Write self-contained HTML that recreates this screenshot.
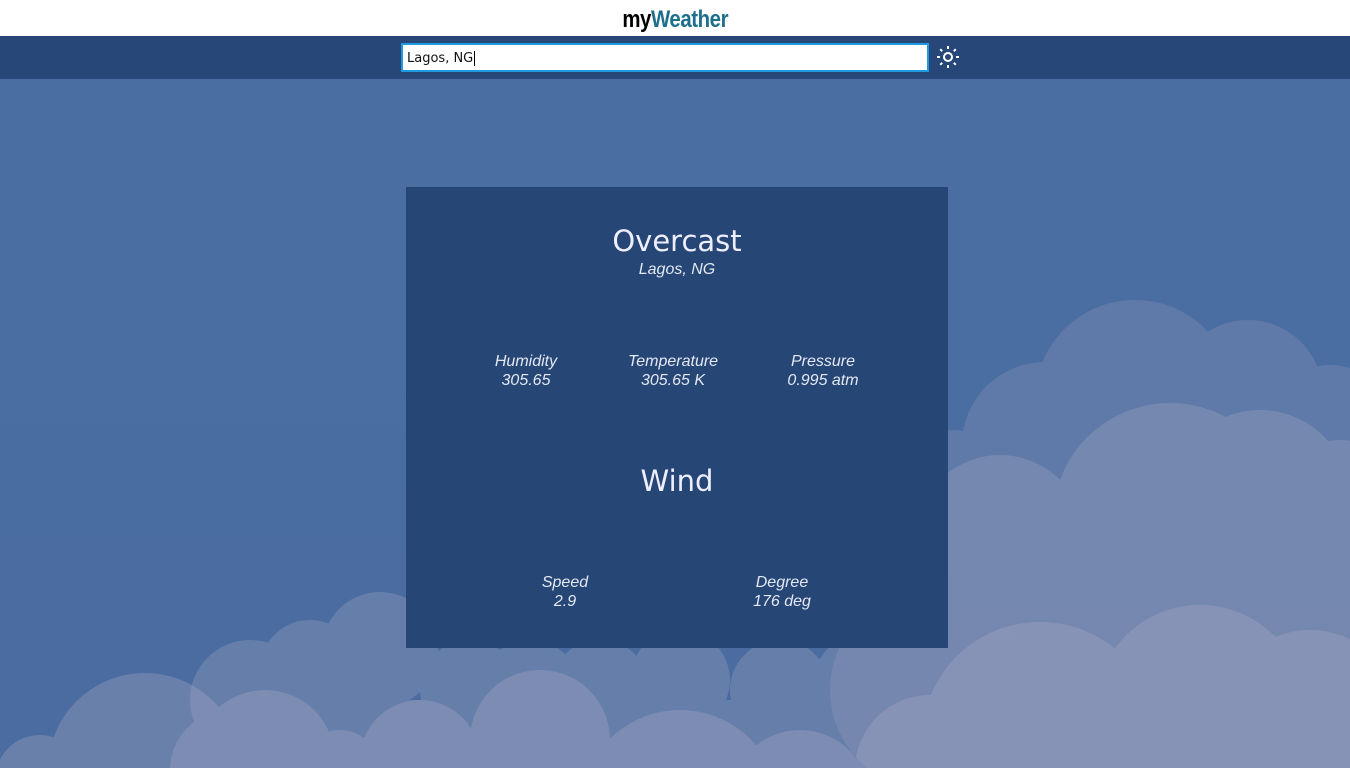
<!DOCTYPE html>
<html><head><meta charset="utf-8"><style>
*{margin:0;padding:0;box-sizing:border-box}
html,body{width:1350px;height:768px;overflow:hidden}
body{position:relative;background:linear-gradient(180deg,#4a6ea3 0%,#4a6ca0 100%);font-family:"Liberation Sans",sans-serif}
.top{position:absolute;left:0;top:0;width:1350px;height:36px;background:#fff;text-align:center}
.logo{font-family:"Liberation Sans Narrow","Liberation Sans",sans-serif;font-weight:bold;font-size:24px;line-height:40px;letter-spacing:-0.5px;transform:scaleX(0.85);display:inline-block}
.logo span{color:#1e6f8c}
.bar{position:absolute;left:0;top:36px;width:1350px;height:43px;background:#264777}
.inp{position:absolute;left:401px;top:43px;width:528px;height:29px;background:#fff;border:2px solid #1e9be0;font-family:"DejaVu Sans",sans-serif;font-size:13px;line-height:27px;padding-left:4px;color:#111}
.sun{position:absolute;left:936px;top:45px}
svg.bg{position:absolute;left:0;top:0}
.card{position:absolute;left:406px;top:187px;width:542px;height:461px;background:#264676;color:#eef;text-align:center}
.h{font-family:"DejaVu Sans",sans-serif;font-size:29px;position:absolute;width:100%}
.i{font-style:italic;font-size:16px;color:#e4e8f2;position:absolute;line-height:19px;text-align:center}
</style></head><body>
<svg class="bg" width="1350" height="768">
<g fill="#a9a9c2" opacity="0.22">
<circle cx="1135" cy="400" r="100"/><circle cx="1248" cy="395" r="75"/><circle cx="1045" cy="445" r="83"/><circle cx="1330" cy="430" r="65"/>
<circle cx="950" cy="520" r="90"/><circle cx="930" cy="690" r="100"/><rect x="930" y="450" width="420" height="318"/>
</g>
<g fill="#b0aec4" opacity="0.28">
<circle cx="1170" cy="520" r="117"/><circle cx="1260" cy="500" r="90"/><circle cx="1000" cy="540" r="85"/><circle cx="1110" cy="550" r="75"/><circle cx="1340" cy="520" r="80"/>
<circle cx="950" cy="650" r="90"/><circle cx="930" cy="740" r="90"/><rect x="950" y="560" width="400" height="208"/>
<circle cx="380" cy="650" r="58"/><circle cx="310" cy="670" r="50"/><circle cx="250" cy="700" r="60"/><circle cx="230" cy="770" r="60"/><circle cx="470" cy="690" r="50"/><circle cx="530" cy="690" r="50"/><circle cx="600" cy="690" r="50"/><circle cx="680" cy="680" r="50"/><circle cx="780" cy="690" r="50"/><circle cx="860" cy="680" r="45"/><circle cx="880" cy="760" r="60"/>
<rect x="250" y="700" width="630" height="68"/>
</g>
<g fill="#b2afc6" opacity="0.3">
<circle cx="1040" cy="740" r="118"/><circle cx="1200" cy="710" r="105"/><circle cx="1310" cy="720" r="90"/><circle cx="930" cy="770" r="75"/>
<circle cx="145" cy="770" r="97"/><circle cx="265" cy="760" r="70"/><circle cx="40" cy="780" r="45"/><circle cx="540" cy="740" r="70"/><circle cx="420" cy="760" r="60"/>
<circle cx="680" cy="810" r="100"/><circle cx="800" cy="800" r="70"/><circle cx="340" cy="770" r="40"/>
</g>
</svg>
<div class="top"><div class="logo">my<span>Weather</span></div></div>
<div class="bar"></div>
<div class="inp">Lagos, NG<span style="border-left:1px solid #000;margin-left:1px"></span></div>
<svg class="sun" width="24" height="24" viewBox="0 0 24 24" fill="none" stroke="#fff" stroke-width="2"><circle cx="12" cy="12" r="4"/><path d="M12 1v3M12 20v3M1 12h3M20 12h3M4.2 4.2l2 2M17.8 17.8l2 2M4.2 19.8l2-2M17.8 6.2l2-2"/></svg>
<div class="card">
<div class="h" style="top:37px">Overcast</div>
<div class="i" style="left:0;width:100%;top:73px">Lagos, NG</div>
<div class="i" style="left:60px;width:120px;top:165px">Humidity<br>305.65</div>
<div class="i" style="left:207px;width:120px;top:165px">Temperature<br>305.65 K</div>
<div class="i" style="left:357px;width:120px;top:165px">Pressure<br>0.995 atm</div>
<div class="h" style="top:277px">Wind</div>
<div class="i" style="left:99px;width:120px;top:386px">Speed<br>2.9</div>
<div class="i" style="left:316px;width:120px;top:386px">Degree<br>176 deg</div>
</div>
</body></html>
